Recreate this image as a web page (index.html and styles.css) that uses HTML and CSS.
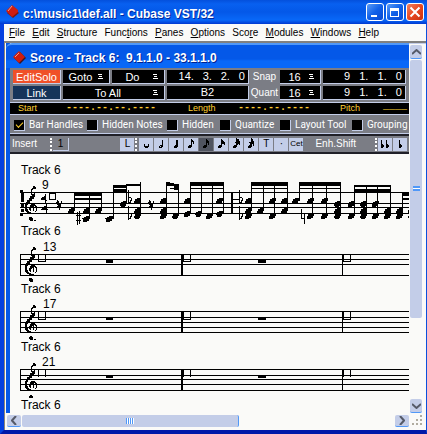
FILE: index.html
```html
<!DOCTYPE html>
<html lang="en">
<head>
<meta charset="utf-8">
<title>Cubase VST/32</title>
<link rel="stylesheet" href="styles.css">
</head>
<body>
<svg class="defs" aria-hidden="true">
  <defs>
    <path id="head" d="M-9 9h12v-3h5v-6h3v-9h-12v3h-6v6h-3z"/>
    <g id="flat"><path d="M-6 -30h3v42h-3zM-3 -9h6v3h3v9h-3v6h-6v-3h3v-6h3v-6h-6z"/></g>
    <path id="rest8" d="M-9 -15h3v3h3v6h6v-6h3v9h-3v9h-3v9h-3v-9h-3v-6h-3v-3h-3v-6h3zM-9 3h6v6h-6z"/>
    <g id="clef">
      <path d="M23 0h2v1h1v2h-3v1h-1v5h-1V3h1V2h1z"/>
      <path d="M25 7v4h-1v2h-2v2h-2v2h-2v2h-1v4h1v2h1v1h2v1h3v1h-5v-1h-2v-1h-1v-1h-1v-7h1v-2h1v-2h2v-2h1v-2h2v-2h1V8h1V7z"/>
      <path d="M21 18h4v1h1v1h1v5h-1v1h-1v-1h1v-4h-1v-1h-1v5h-1v-4h-1v1h-1v3h-1v-1h-1v-3h1v-2h1z"/>
    </g>
  </defs>
</svg>
<div class="window">
  <header class="titlebar">
    <svg class="gem" width="14" height="14" viewBox="0 0 14 14"><path d="M1 8 7 2l6 6-6 5z" fill="#7c1710"/><path d="M0 6 6 0l6 5v2l-6 5z" fill="#cf1d10"/><path d="M2 6 6 1" stroke="#f2a08c"/></svg>
    <h1>c:\music1\def.all - Cubase VST/32</h1>
    <div class="winbuttons">
      <button aria-label="Minimize"><svg viewBox="0 0 16 16"><path d="M4 11h6v2H4z"/></svg></button>
      <button aria-label="Maximize"><svg viewBox="0 0 16 16"><path d="M3 4h9v9H3zm1 3v5h7V7z" fill-rule="evenodd"/></svg></button>
      <button class="close" aria-label="Close"><svg viewBox="0 0 16 16"><path d="M3.500 3.500 12.500 12.500M12.500 3.500 3.500 12.500" stroke="#fff" stroke-width="2"/></svg></button>
    </div>
  </header>
  <nav class="menubar">
    <a href="#"><u>F</u>ile</a><a href="#"><u>E</u>dit</a><a href="#"><u>S</u>tructure</a><a href="#">Func<u>t</u>ions</a><a href="#"><u>P</u>anes</a><a href="#"><u>O</u>ptions</a><a href="#">Sco<u>r</u>e</a><a href="#"><u>M</u>odules</a><a href="#"><u>W</u>indows</a><a href="#"><u>H</u>elp</a>
  </nav>
  <div class="client">
    <div class="workspace">
      <main class="child">
        <header class="childtitle">
          <svg class="gem" width="13" height="13" viewBox="0 0 13 13"><path d="M1 7l6-6 6 6-6 6z" fill="#3b1522"/><path d="M0 6l6-6 6 6-6 6z" fill="#cf1d10"/><path d="M2 6 6 2" stroke="#f2a08c"/></svg>
          <h2>Score - Track 6:&nbsp; 9.1.1.0 - 33.1.1.0</h2>
        </header>
        <div class="panel">
          <button class="cell solo">EditSolo</button>
          <label class="pick"><select class="cell" aria-label="Goto"><option>Goto</option></select><svg viewBox="0 0 5 5"><path d="M0 0h4v1H0zM1 2h3v1H1zM0 4h5v1H0z"/></svg></label>
          <label class="pick"><select class="cell" aria-label="Do"><option>Do</option></select><svg viewBox="0 0 5 5"><path d="M0 0h4v1H0zM1 2h3v1H1zM0 4h5v1H0z"/></svg></label>
          <output class="cell pos"><span>14.</span><span>3.</span><span>2.</span><span>0</span></output>
          <label class="cap" for="snap">Snap</label>
          <span class="pick"><select class="cell" id="snap"><option>16</option></select><svg viewBox="0 0 5 5"><path d="M0 0h4v1H0zM1 2h3v1H1zM0 4h5v1H0z"/></svg></span>
          <output class="cell pos"><span>9</span><span>1.</span><span>1.</span><span>0</span></output>
          <button class="cell link">Link</button>
          <label class="pick wide"><select class="cell" aria-label="Target"><option>To All</option></select><svg viewBox="0 0 5 5"><path d="M0 0h4v1H0zM1 2h3v1H1zM0 4h5v1H0z"/></svg></label>
          <output class="cell">B2</output>
          <label class="cap" for="quant">Quant</label>
          <span class="pick"><select class="cell" id="quant"><option>16</option></select><svg viewBox="0 0 5 5"><path d="M0 0h4v1H0zM1 2h3v1H1zM0 4h5v1H0z"/></svg></span>
          <output class="cell pos"><span>9</span><span>1.</span><span>1.</span><span>0</span></output>
        </div>
        <div class="infoline">
          <span>Start</span><b>----.--.--.----</b><span>Length</span><b>----.--.----</b><span>Pitch</span><b class="low">____</b>
        </div>
        <div class="checks">
          <label><input type="checkbox" checked>Bar Handles</label>
          <label><input type="checkbox">Hidden Notes</label>
          <label><input type="checkbox">Hidden</label>
          <label><input type="checkbox">Quantize</label>
          <label><input type="checkbox">Layout Tool</label>
          <label><input type="checkbox">Grouping</label>
        </div>
        <div class="insert">
          <span class="name">Insert</span>
          <i class="grip"></i><button class="voice">1</button>
          <div class="notes">
            <button>L</button><i class="grip"></i>
            <button aria-label="Whole"><svg viewBox="0 0 12 12"><path d="M4 6h1v2h3V6h1v3H8v1H5V9H4z"/></svg></button>
            <button aria-label="Half"><svg viewBox="0 0 12 12"><path d="M7 2h1v7H7v1H4V8h1V7h2zM5 8v1h1V8z"/></svg></button>
            <button aria-label="Quarter"><svg viewBox="0 0 12 12"><path d="M6 2h2v7H7v1H4V8h1V7h1z"/></svg></button>
            <button aria-label="Eighth"><svg viewBox="0 0 12 12"><path d="M6 1h1v1h1v1h1v3H8V4H7v5H6v1H3V8h1V7h2z"/></svg></button>
            <button class="on" aria-label="Sixteenth"><svg viewBox="0 0 12 12"><path d="M6 1h1v1h1v1h1v4H8V5H7v4H6v1H3V8h1V7h2z"/></svg></button>
            <button aria-label="Thirty-second"><svg viewBox="0 0 12 12"><path d="M6 1h1v1h1v1h1v1h1v3H9V6H7v3H6v1H3V8h1V7h2z"/></svg></button>
            <button aria-label="Sixty-fourth"><svg viewBox="0 0 12 12"><path d="M6 0h1v1h2v2h1v4H9V6H8v1H7v2H6v1H3V8h1V7h2V5H5V4h1z"/></svg></button>
            <button aria-label="128th"><svg viewBox="0 0 12 12"><path d="M6 0h1v1h1v2h1v5H8V6H7v3H6v1H3V8h1V7h1V5H4V4h2z"/></svg></button>
            <button>T</button><button>·</button><button>Cet</button>
          </div>
          <span class="enh">Enh.Shift</span>
          <i class="grip"></i>
          <div class="flats">
            <button aria-label="Double flat"><svg viewBox="0 0 12 12"><path d="M2 2h1v4h1v1h1v2H4v1H2zM7 2h1v4h1v1h1v2H9v1H7z"/></svg></button>
            <button aria-label="Flat"><svg viewBox="0 0 12 12"><path d="M5 2h1v4h1v1h1v2H7v1H5z"/></svg></button>
          </div>
        </div>
        <section class="score">
          <h3>Track 6</h3>
          <svg class="staff first">
            <text x="32" y="12">9</text>
            <g><rect x="10" y="15" width="100%" height="1"/><rect x="10" y="26" width="100%" height="1"/><rect x="10" y="30" width="100%" height="1"/><rect x="10" y="36" width="100%" height="1"/></g>
            <path d="M10 13h3v2h-3zM11 16h3v9h-3zM11 27h3v3h-3zM11 32h3v3h-3zM10 37h3v2h-3z"/>
            <use href="#clef" y="9"/>
            <path d="M19 40h3v1h1v3h-3v-1h-1zM24 43h2v1h-2z"/>
            <g transform="translate(-10 -22) scale(.333333)">
              <path d="M123 129h3v-3h6v-3h4v-6h3v18h3v3h-3v6h-4v-9h-12zM123 163h3v-3h6v-6h6v-9h3v18h3v3h-3v9h-4v-9h-14z"/>
              <path d="M148 113h20v21h-20zm3 3v15h14v-15z" fill-rule="evenodd"/>
              <use href="#rest8" x="180" y="150"/><use href="#rest8" x="457" y="150"/>
              <path d="M231 172h3v39h-3zM237 169h3v39h-3zM228 181h15v3h-15zM228 196h15v3h-15z"/>
              <path d="M222 114h84v10h-84zM222 130h84v6h-84zM339 91h39v-4h45v6h-42v5h-42zM339 101h42v9h-42zM498 81h13v3h12v3h14v19h-14v-5h-12v-3h12v-5h-25zM571 81h102v12h-102zM571 98h102v4h-102z"/>
              <path d="M222 114h3v54h-3zM266 114h3v78h-3zM303 114h3v54h-3zM339 93h3v99h-3zM379 93h3v55h-3zM420 82h3v101h-3zM498 82h3v101h-3zM535 90h3v93h-3zM571 82h3v95h-3zM604 82h3v95h-3zM637 82h3v101h-3zM669 82h3v95h-3z"/>
              <use href="#head" x="215" y="168"/><use href="#head" x="258" y="168"/><use href="#head" x="295" y="168"/><use href="#head" x="258" y="192"/><path d="M246 190h24v3h-24zM315 190h28v3h-28z"/><use href="#head" x="328" y="192"/><use href="#head" x="371" y="148"/><use href="#head" x="413" y="138"/><use href="#head" x="413" y="168"/><use href="#head" x="413" y="183"/>
              <use href="#head" x="489" y="138"/><use href="#head" x="489" y="168"/><use href="#head" x="489" y="183"/><use href="#head" x="527" y="183"/><use href="#head" x="562" y="138"/><use href="#head" x="562" y="176"/><use href="#head" x="596" y="176"/><use href="#head" x="628" y="183"/>
              <use href="#flat" x="391" y="135"/><use href="#flat" x="391" y="182"/>
            </g>
            <g transform="translate(203 -22) scale(.333333)">
              <path d="M55 112h5v65h-5z"/>
              <path d="M114 81h110v12h-110zM114 98h110v4h-110zM258 81h126v12h-126zM258 98h126v4h-126zM423 90h110v7h-110zM423 102h110v9h-110zM568 112h30v11h-30zM568 128h30v6h-30z"/>
              <path d="M114 82h3v86h-3zM150 82h3v86h-3zM183 82h3v101h-3zM222 82h3v86h-3zM258 82h3v56h-3zM297 82h3v101h-3zM339 82h3v101h-3zM381 82h3v101h-3zM423 90h3v93h-3zM459 90h3v93h-3zM492 90h3v93h-3zM531 90h3v93h-3zM567 112h3v71h-3z"/>
              <use href="#head" x="20" y="138"/><use href="#head" x="20" y="176"/><use href="#head" x="106" y="138"/><use href="#head" x="106" y="168"/><use href="#head" x="106" y="183"/><use href="#head" x="142" y="168"/><use href="#head" x="178" y="138"/><use href="#head" x="178" y="183"/><use href="#head" x="214" y="138"/><use href="#head" x="214" y="168"/><use href="#head" x="248" y="138"/><use href="#head" x="291" y="138"/><use href="#head" x="291" y="183"/><use href="#head" x="333" y="138"/><use href="#head" x="333" y="183"/><use href="#head" x="374" y="148"/><use href="#head" x="374" y="168"/><use href="#head" x="374" y="183"/><use href="#head" x="415" y="148"/><use href="#head" x="415" y="183"/><use href="#head" x="452" y="148"/><use href="#head" x="452" y="168"/><use href="#head" x="452" y="183"/><use href="#head" x="486" y="148"/><use href="#head" x="486" y="183"/><use href="#head" x="523" y="168"/><use href="#head" x="523" y="183"/><use href="#head" x="558" y="168"/><use href="#head" x="558" y="183"/>
              <use href="#flat" x="84" y="135"/><use href="#flat" x="84" y="182"/><path d="M60 132h18v3h-18z"/>
              <path d="M264 162h3v30h-3zM273 175h3v32h-3zM264 175h12v3h-12zM264 190h12v3h-12zM585 165h3v12h-3zM585 182h3v6h-3z"/>
            </g>
          </svg>
          <h3>Track 6</h3>
          <svg class="staff">
            <text x="33" y="13">13</text>
            <g><rect x="10" y="16" width="100%" height="1"/><rect x="10" y="21" width="100%" height="1"/><rect x="10" y="26" width="100%" height="1"/><rect x="10" y="37" width="100%" height="1"/></g>
            <path d="M10 16h1v22h-1zM171 16h2v22h-2zM332 16h1v22h-1zM96 21h7v4h-7zM248 21h8v4h-8z"/>
            <path class="box" d="M28.500 16.500h7v7h-7zM173.500 16.500h7v7h-7zM333.500 16.500h7v7h-7z"/>
            <use href="#clef" y="9"/><path d="M19 40h3v1h1v3h-3v-1h-1z"/>
          </svg>
          <h3>Track 6</h3>
          <svg class="staff">
            <text x="33" y="12">17</text>
            <g><rect x="10" y="15" width="100%" height="1"/><rect x="10" y="21" width="100%" height="1"/><rect x="10" y="26" width="100%" height="1"/><rect x="10" y="31" width="100%" height="1"/><rect x="10" y="36" width="100%" height="1"/></g>
            <path d="M10 15h1v22h-1zM171 15h2v22h-2zM332 15h1v22h-1zM96 21h7v3h-7zM248 21h8v3h-8z"/>
            <path class="box" d="M28.500 15.500h7v8h-7zM173.500 15.500h7v8h-7zM333.500 15.500h7v8h-7z"/>
            <use href="#clef" y="9"/><path d="M20 40h2v1h1v3h-3v-1h-1v-2h1zM24 43h2v1h-2z"/>
          </svg>
          <h3>Track 6</h3>
          <svg class="staff">
            <text x="32" y="12">21</text>
            <g><rect x="10" y="15" width="100%" height="1"/><rect x="10" y="21" width="100%" height="1"/><rect x="10" y="25" width="100%" height="1"/><rect x="10" y="30" width="100%" height="1"/><rect x="10" y="36" width="100%" height="1"/></g>
            <path d="M10 15h1v22h-1zM171 15h2v22h-2zM332 15h1v22h-1zM96 21h7v3h-7zM248 21h8v3h-8zM28 16h1v7h-1zM35 16h1v7h-1zM173 16h1v7h-1zM180 16h1v7h-1zM333 16h1v7h-1zM340 16h1v7h-1z"/>
            <use href="#clef" y="9"/><path d="M20 41h2v1h1v2h-4v-2h1z"/>
          </svg>
          <h3>Track 6</h3>
        </section>
      </main>
      <div class="vscroll">
        <button aria-label="Scroll up"><svg viewBox="0 0 9 6"><path d="M0 5 4.500 1 9 5" /></svg></button>
        <div class="thumb"><i></i></div>
        <button aria-label="Scroll down"><svg viewBox="0 0 9 6"><path d="M0 1 4.500 5 9 1" /></svg></button>
      </div>
    </div>
    <div class="bottom">
      <div class="hscroll">
        <button aria-label="Scroll left"><svg viewBox="0 0 6 9"><path d="M5 0 1 4.500 5 9" /></svg></button>
        <div class="thumb"><i></i></div>
        <button aria-label="Scroll right"><svg viewBox="0 0 6 9"><path d="M1 0 5 4.500 1 9" /></svg></button>
      </div>
      <svg class="sizer" viewBox="0 0 10 10"><path d="M8 0h2v2H8zM4 4h2v2H4zM8 4h2v2H8zM0 8h2v2H0zM4 8h2v2H4zM8 8h2v2H8z"/></svg>
    </div>
  </div>
</div>
</body>
</html>
```
FILE: styles.css
```css
* { box-sizing: border-box; }
body { margin: 0; font: 11px/14px "Liberation Sans", Arial, sans-serif; color: #000; }
button, select, input { font: inherit; margin: 0; padding: 0; border: 0; border-radius: 0; appearance: none; color: inherit; }
h1, h2, h3 { margin: 0; font-size: inherit; }
.defs { position: absolute; width: 0; height: 0; }
.window { min-height: 100vh; display: flex; flex-direction: column; background: #fafaf8; border: solid #0a50dc; border-width: 0 1px 4px 4px; border-bottom-color: #0018a8; border-left-color: #0440e0; }

.titlebar { height: 24px; display: flex; align-items: center; gap: 3px; margin: 0 -1px 0 -4px; padding: 0 3px 0 6px; background: linear-gradient(#0450dc, #0860f0 4px, #0458e8 12px, #0868f8 20px, #0038d0); color: #fff; }
.titlebar h1 { flex: 1; font-size: 12px; font-weight: bold; line-height: 16px; padding-top: 4px; text-shadow: 1px 1px #0028a0; white-space: nowrap; }
.titlebar .gem { flex: none; }
.winbuttons { display: flex; gap: 2px; }
.winbuttons button { width: 18px; height: 18px; border: 1px solid #fff; border-radius: 3px; background: linear-gradient(135deg, #5a9cf8, #1060e8 50%, #0848d0); }
.winbuttons .close { background: linear-gradient(135deg, #f08060, #e84820 50%, #c83010); }
.winbuttons svg { display: block; width: 16px; height: 16px; fill: #fff; }

.menubar { height: 17px; display: flex; align-items: center; justify-content: space-between; padding: 1px 47px 0 5px; font-size: 10px; }
.menubar a { color: inherit; text-decoration: none; white-space: nowrap; }

.client { flex: 1; display: flex; flex-direction: column; border-top: 2px solid #808080; border-left: 1px solid #8a8678; padding-left: 1px; }
.workspace { flex: 1; display: flex; }
.child { flex: 1; min-width: 0; display: flex; flex-direction: column; border-left: 4px solid #0458e8; }
.childtitle { height: 25px; display: flex; align-items: center; gap: 4px; margin-left: -4px; padding: 2px 0 0 7px; border-top: 2px solid #5098f8; border-radius: 6px 0 0; background: linear-gradient(#0458e8, #0458e8 14px, #0868f8 16px, #0868f8); color: #fff; }
.childtitle h2 { font-size: 12px; text-shadow: 1px 1px #002090; white-space: nowrap; }

.panel { display: grid; grid-template-columns: 48fr 47fr 53fr 82fr 27fr 41fr 83fr; gap: 2px; padding: 2px 3px; background: #7b7d85; border-bottom: 1px solid #c3cde8; color: #fff; }
.cell { display: block; width: 100%; min-width: 0; height: 14px; line-height: 12px; padding: 0 3px; text-align: center; background: #000; color: #fff; border: solid #c3cde8; border-width: 0 1px 1px 0; }
.panel .solo { background: #f05028; }
.panel .link { background: #16345a; }
.pick { position: relative; min-width: 0; }
.pick select { padding-right: 14px; text-align: center; text-align-last: center; }
.pick svg { position: absolute; right: 7px; top: 4px; width: 5px; height: 5px; fill: #fff; pointer-events: none; }
.wide { grid-column: span 2; }
.pos { display: flex; justify-content: space-between; }
.pos span:first-child { width: 24px; text-align: right; }
.cap { text-align: center; font-size: 10px; }

.infoline { display: grid; grid-template-columns: 48fr 122fr 50fr 102fr 43fr 26fr; height: 12px; line-height: 10px; font-size: 9px; padding-left: 8px; background: #000; color: #ffd030; border-bottom: 1px solid #c3cde8; }
.infoline b { font: bold 10px/10px "Liberation Mono", monospace; }
.infoline .low { line-height: 8px; }

.checks { display: grid; grid-template-columns: 73fr 80fr 53fr 60fr 72fr 57fr; height: 19px; align-items: center; padding-left: 4px; background: #7b7d85; color: #fff; border-bottom: 1px solid #c3cde8; border-top: 2px solid #7b7d85; font-family: Roboto, "Liberation Sans", sans-serif; font-size: 10px; }
.checks label { display: flex; align-items: center; gap: 4px; white-space: nowrap; }
.checks input { flex: none; width: 11px; height: 11px; background: #000; border: solid #c3cde8; border-width: 0 1px 1px 0; display: grid; }
.checks input:checked::before { content: ""; width: 6px; height: 3px; margin: 2px 0 0 2px; border: solid #ffd030; border-width: 0 0 1px 1px; transform: rotate(-45deg); }

.insert { display: flex; align-items: center; height: 20px; padding: 0 2px; background: #7b7d85; border-top: 2px solid #202028; border-bottom: 2px solid #202028; color: #fff; font-size: 10px; }
.insert .name { width: 38px; }
.insert button { flex: none; width: 14px; height: 13px; line-height: 12px; background: #c3cde8; color: #000; }
.insert .grip { flex: none; width: 3px; height: 13px; border-left: 2px dotted #fff; }
.insert .voice { width: 16px; background: #7b7d85; border: solid #c3cde8; border-width: 0 1px 1px 0; margin-right: auto; }
.notes, .flats { display: flex; gap: 1px; }
.notes button:last-child { font-size: 8px; }
.notes .on { background: #505460; }
.insert svg { display: block; width: 12px; height: 12px; margin: auto; shape-rendering: crispEdges; }
.enh { margin: 0 19px 0 12px; }

.score { flex: 1; padding-top: 9px; overflow: hidden; }
.score h3 { height: 14px; padding-left: 11px; font-size: 12px; line-height: 14px; font-weight: normal; }
.staff { display: block; width: 100%; height: 44px; overflow: visible; shape-rendering: crispEdges; }
.staff.first { height: 47px; }
.staff text { font-size: 12px; }
.staff .box { fill: none; stroke: #000; }

.vscroll { width: 17px; display: flex; flex-direction: column; padding: 1px 4px 0 1px; background: #fafaf8; border-top: 1px solid #c3cde8; }
.vscroll button, .hscroll button { flex: none; background: #c3cde8; border-radius: 2px; display: grid; place-items: center; }
.vscroll button { height: 14px; border-bottom: 1px solid #5098f8; }
.vscroll button svg { width: 9px; height: 6px; }
.hscroll button svg { width: 6px; height: 9px; }
.vscroll button path, .hscroll button path { fill: none; stroke: #555a68; stroke-width: 2; }
.thumb { display: grid; place-items: center; background: #c3cde8; border-radius: 2px; }
.vscroll .thumb { flex: 0 0 70%; margin: 1px 0 auto; }
.vscroll .thumb i { width: 7px; height: 5px; border: solid #5098f8; border-width: 2px 0; background: #fff; }
.bottom { display: flex; justify-content: space-between; height: 17px; padding: 2px 4px 3px 1px; }
.hscroll { flex: 1; display: flex; margin-right: 3px; }
.hscroll button { width: 14px; border-bottom: 1px solid #5098f8; }
.hscroll .thumb { width: 54%; margin: 0 auto 0 1px; border-right: 1px solid #5098f8; }
.hscroll .thumb i { width: 8px; height: 6px; background: repeating-linear-gradient(90deg, #5098f8 0 1px, #fff 1px 2px); }
.sizer { width: 10px; height: 10px; fill: #b0aca0; }
```
